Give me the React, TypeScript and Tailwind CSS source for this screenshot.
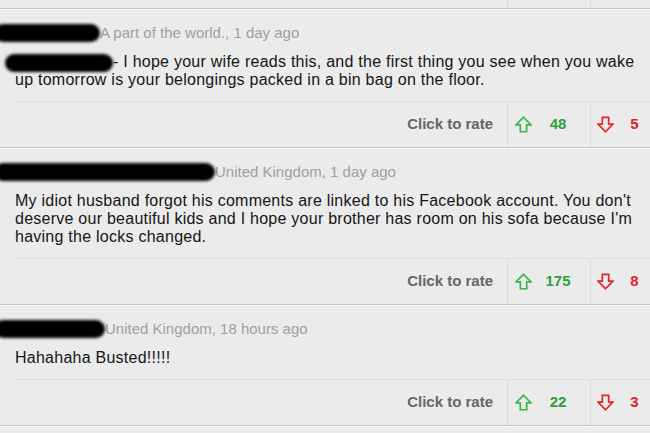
import type { ReactNode } from 'react';

interface Comment {
  id: number;
  blob: number;
  location: string;
  bodyBlob?: number;
  lines: ReactNode[];
  up: number;
  down: number;
}

const comments: Comment[] = [
  {
    id: 1,
    blob: 106,
    location: 'A part of the world., 1 day ago',
    bodyBlob: 108,
    lines: [
      '- I hope your wife reads this, and the first thing you see when you wake',
      'up tomorrow is your belongings packed in a bin bag on the floor.',
    ],
    up: 48,
    down: 5,
  },
  {
    id: 2,
    blob: 221,
    location: 'United Kingdom, 1 day ago',
    lines: [
      "My idiot husband forgot his comments are linked to his Facebook account. You don't",
      "deserve our beautiful kids and I hope your brother has room on his sofa because I'm",
      'having the locks changed.',
    ],
    up: 175,
    down: 8,
  },
  {
    id: 3,
    blob: 111,
    location: 'United Kingdom, 18 hours ago',
    lines: ['Hahahaha Busted!!!!!'],
    up: 22,
    down: 3,
  },
];

function Blob({ width, className = '' }: { width: number; className?: string }) {
  return (
    <span
      className={`inline-block h-[18px] rounded-full bg-black blur-[1.5px] align-middle ${className}`}
      style={{ width }}
    />
  );
}

function UpArrow() {
  return (
    <svg width="17" height="17" viewBox="0 0 16 16" className="shrink-0">
      <polygon
        points="8,1.2 15,8.4 11,8.4 11,14.8 5,14.8 5,8.4 1,8.4"
        fill="none"
        stroke="#3bb54a"
        strokeWidth="1.6"
      />
    </svg>
  );
}

function DownArrow() {
  return (
    <svg width="17" height="17" viewBox="0 0 16 16" className="shrink-0">
      <polygon
        points="8,14.8 15,7.6 11,7.6 11,1.2 5,1.2 5,7.6 1,7.6"
        fill="none"
        stroke="#e3262d"
        strokeWidth="1.6"
      />
    </svg>
  );
}

function RatingRow({ up, down }: { up?: number; down?: number }) {
  const empty = up === undefined;
  return (
    <div className={`flex ${empty ? 'h-[8px]' : 'h-[45px]'}`}>
      <div className="flex-1 flex items-center justify-end pr-[14px] text-[15px] font-bold text-[#666666]">
        {!empty && 'Click to rate'}
      </div>
      <div className="w-[83px] border-l border-[#dcdcdc] flex items-center pl-[7px]">
        {!empty && (
          <>
            <UpArrow />
            <span className="ml-[4px] w-[44px] text-center text-[15px] font-bold text-[#2f9e3d]">{up}</span>
          </>
        )}
      </div>
      <div className="w-[60px] border-l border-[#dcdcdc] flex items-center pl-[6px]">
        {!empty && (
          <>
            <DownArrow />
            <span className="ml-[5px] w-[44px] text-center text-[15px] font-bold text-[#e0222b]">{down}</span>
          </>
        )}
      </div>
    </div>
  );
}

function Divider() {
  return (
    <div>
      <div className="h-px bg-[#c6c6c6]" />
      <div className="h-px bg-[#f8f8f8]" />
    </div>
  );
}

function CommentBlock({ c }: { c: Comment }) {
  return (
    <div>
      <div className="pt-[13px]">
        <div className="h-[18px] leading-[18px] text-[15px] text-[#a0a0a0] whitespace-nowrap">
          <Blob width={c.blob} className="-ml-[6px]" />
          <span className="align-middle">{c.location}</span>
        </div>
        <div className="mt-[12px] pl-[15px] pb-[12px] text-[16px] leading-[18px] tracking-[0.25px] text-[#151515] whitespace-nowrap">
          {c.lines.map((line, i) => (
            <div key={i}>
              {i === 0 && c.bodyBlob && <Blob width={c.bodyBlob} className="-ml-[10px] -my-[4px]" />}
              {line}
            </div>
          ))}
        </div>
      </div>
      <div className="ml-[15px] h-px bg-[#dedede]" />
      <RatingRow up={c.up} down={c.down} />
      <Divider />
    </div>
  );
}

export default function App() {
  return (
    <div
      className="w-[650px] h-[433px] overflow-hidden bg-[#ebebeb]"
      style={{ fontFamily: '"Liberation Sans", Arial, sans-serif' }}
    >
      <RatingRow />
      <Divider />
      {comments.map(c => (
        <CommentBlock key={c.id} c={c} />
      ))}
    </div>
  );
}
